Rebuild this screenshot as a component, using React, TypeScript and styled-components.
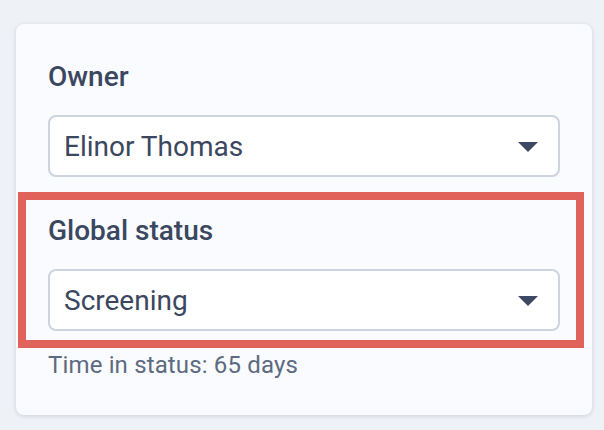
import React from "react";
import styled, { createGlobalStyle } from "styled-components";

const GlobalStyle = createGlobalStyle`
  html, body {
    margin: 0;
    padding: 0;
    background: #eef1f5;
    font-family: Roboto, "Liberation Sans", Arial, sans-serif;
  }
  * { box-sizing: border-box; }
`;

const Page = styled.div`
  width: 604px;
  height: 430px;
  padding: 24px 12px 0 16px;
  background: #eef1f5;
`;

const Card = styled.section`
  width: 576px;
  height: 391px;
  background: #f9fbfe;
  border-radius: 8px;
  box-shadow: 0 1px 4px rgba(40, 52, 80, 0.16);
  padding: 37px 32px 36px 32px;
  display: flex;
  flex-direction: column;
`;

const Field = styled.div`
  display: flex;
  flex-direction: column;
  gap: 22px;
`;

const Highlight = styled.div`
  margin: 15px -24px 0 -30px;
  border: 8px solid #e0625a;
  padding: 15px 16px 9px 22px;
`;

const Label = styled.label`
  font-size: 28px;
  font-weight: 500;
  line-height: 32px;
  color: #3b475f;
`;

const SelectBox = styled.div`
  height: 62px;
  border: 2px solid #cdd3df;
  border-radius: 8px;
  background: #ffffff;
  display: flex;
  align-items: center;
  justify-content: space-between;
  padding: 0 20px 0 14px;
`;

const Value = styled.span`
  font-size: 28px;
  line-height: 33px;
  color: #3b475f;
`;

const Caret = styled.svg`
  width: 20px;
  height: 10px;
  margin-top: 2px;
  flex: none;
`;

const Helper = styled.p`
  margin: 3px 0 0 0;
  font-size: 24px;
  line-height: 28px;
  letter-spacing: 0.15px;
  color: #5d6a80;
`;

const Select: React.FC<{ value: string }> = ({ value }) => (
  <SelectBox>
    <Value>{value}</Value>
    <Caret viewBox="0 0 20 10">
      <polygon points="0,0 20,0 10,10" fill="#3d4963" />
    </Caret>
  </SelectBox>
);

export default function App() {
  return (
    <>
      <GlobalStyle />
      <Page>
        <Card>
          <Field>
            <Label>Owner</Label>
            <Select value="Elinor Thomas" />
          </Field>
          <Highlight>
            <Field>
              <Label>Global status</Label>
              <Select value="Screening" />
            </Field>
          </Highlight>
          <Helper>Time in status: 65 days</Helper>
        </Card>
      </Page>
    </>
  );
}
